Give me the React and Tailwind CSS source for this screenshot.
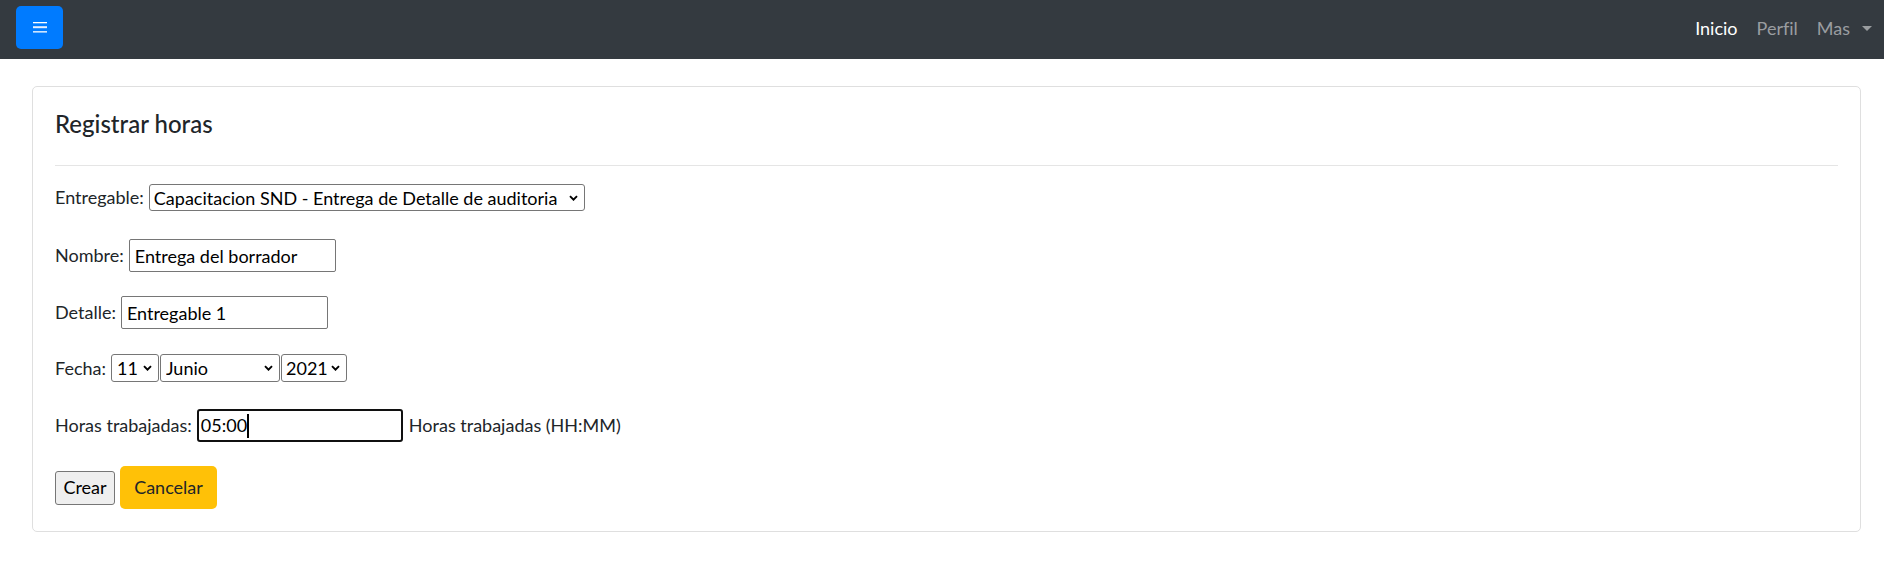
import React from 'react';

const Chevron = () => (
  <svg viewBox="0 0 9 6" width="9" height="6" className="absolute right-[7px] top-1/2 -translate-y-1/2 pointer-events-none text-black">
    <path d="M1 1.2l3.5 3.5L8 1.2" fill="none" stroke="currentColor" strokeWidth="1.9" />
  </svg>
);

function Select({ value, options, className, pad }) {
  return (
    <div className="relative inline-flex">
      <select
        defaultValue={value}
        className={`appearance-none bg-white text-black border border-[#767676] rounded-[3px] text-[18px] outline-none ${pad} ${className}`}
      >
        {options.map(o => <option key={o}>{o}</option>)}
      </select>
      <Chevron />
    </div>
  );
}

function Row({ label, className, children }) {
  return (
    <div className={`flex items-center gap-[5px] ${className}`}>
      <span>{label}</span>
      {children}
    </div>
  );
}

export default function App() {
  const meses = ['Enero', 'Febrero', 'Marzo', 'Abril', 'Mayo', 'Junio', 'Julio', 'Agosto', 'Septiembre', 'Octubre', 'Noviembre', 'Diciembre'];
  const dias = Array.from({ length: 31 }, (_, i) => String(i + 1));

  return (
    <div className="min-h-screen bg-white text-[#212529] [font-variant-ligatures:none] font-['Segoe_UI',Lato,'Liberation_Sans',sans-serif]">
      {/* NAVBAR */}
      <nav className="h-[59px] bg-[#343a40] flex justify-between pl-[16px] pr-[12px]">
        <div className="pt-[6px]">
          <button className="w-[47px] h-[43px] rounded-[5px] bg-[#007bff] flex items-center justify-center">
            <svg width="14" height="11" viewBox="0 0 14 11">
              <rect x="0" y="0" width="14" height="1.3" fill="#fff" />
              <rect x="0" y="4.2" width="14" height="2" fill="#e6efff" />
              <rect x="0" y="9.2" width="14" height="1.3" fill="#fff" />
            </svg>
          </button>
        </div>
        <ul className="flex items-center gap-[19px] text-[18px] pb-[2px]">
          <li className="text-white">Inicio</li>
          <li className="text-[#9a9da0]">Perfil</li>
          <li className="text-[#9a9da0] flex items-center">
            Mas
            <span className="ml-[12px] w-0 h-0 border-t-[5px] border-x-[5px] border-x-transparent border-t-[#9a9da0]" />
          </li>
        </ul>
      </nav>

      {/* CARD */}
      <div className="mt-[27px] ml-[32px] mr-[23px] border border-[#dfdfdf] rounded-[5px] p-[22px] text-[18px]">
        <h4 className="text-[24px] font-medium leading-[30px] h-[30px] text-[#212529]">Registrar horas</h4>
        <hr className="mt-[26px] border-t border-[#e5e5e5]" />

        <Row label="Entregable:" className="mt-[18px] h-[27px]">
          <Select
            value="Capacitacion SND - Entrega de Detalle de auditoria"
            options={['Capacitacion SND - Entrega de Detalle de auditoria', 'Capacitacion SND - Entrega final']}
            className="w-[436px] h-[27px]"
            pad="pl-[4px]"
          />
        </Row>

        <Row label="Nombre:" className="mt-[28px] h-[33px]">
          <input
            readOnly
            value="Entrega del borrador"
            className="w-[207px] h-[33px] border border-[#767676] rounded-[2px] px-[5px] text-black text-[18px] outline-none"
          />
        </Row>

        <Row label="Detalle:" className="mt-[24px] h-[33px]">
          <input
            readOnly
            value="Entregable 1"
            className="w-[207px] h-[33px] border border-[#767676] rounded-[2px] px-[5px] text-black text-[18px] outline-none"
          />
        </Row>

        <Row label="Fecha:" className="mt-[25px] h-[28px]">
          <div className="flex gap-[1px]">
            <Select value="11" options={dias} className="w-[48px] h-[28px]" pad="pl-[5px]" />
            <Select value="Junio" options={meses} className="w-[120px] h-[28px]" pad="pl-[5px]" />
            <Select value="2021" options={['2020', '2021', '2022']} className="w-[66px] h-[28px]" pad="pl-[4px]" />
          </div>
        </Row>

        <Row label="Horas trabajadas:" className="mt-[27px] h-[33px]">
          <div className="w-[206px] h-[33px] border-2 border-[#101010] rounded-[3px] pl-[2px] flex items-center text-black">
            <span>05:00</span>
            <span className="w-[2px] h-[24px] bg-black" />
          </div>
          <span className="ml-[1px]">Horas trabajadas (HH:MM)</span>
        </Row>

        <div className="mt-[24px] h-[43px] flex items-center gap-[5px]">
          <button className="w-[60px] h-[34px] bg-[#efefef] border border-[#767676] rounded-[3px] text-black text-[18px]">Crear</button>
          <button className="w-[97px] h-[43px] bg-[#ffc107] rounded-[5px] text-[#212529] text-[18px]">Cancelar</button>
        </div>
      </div>
    </div>
  );
}
